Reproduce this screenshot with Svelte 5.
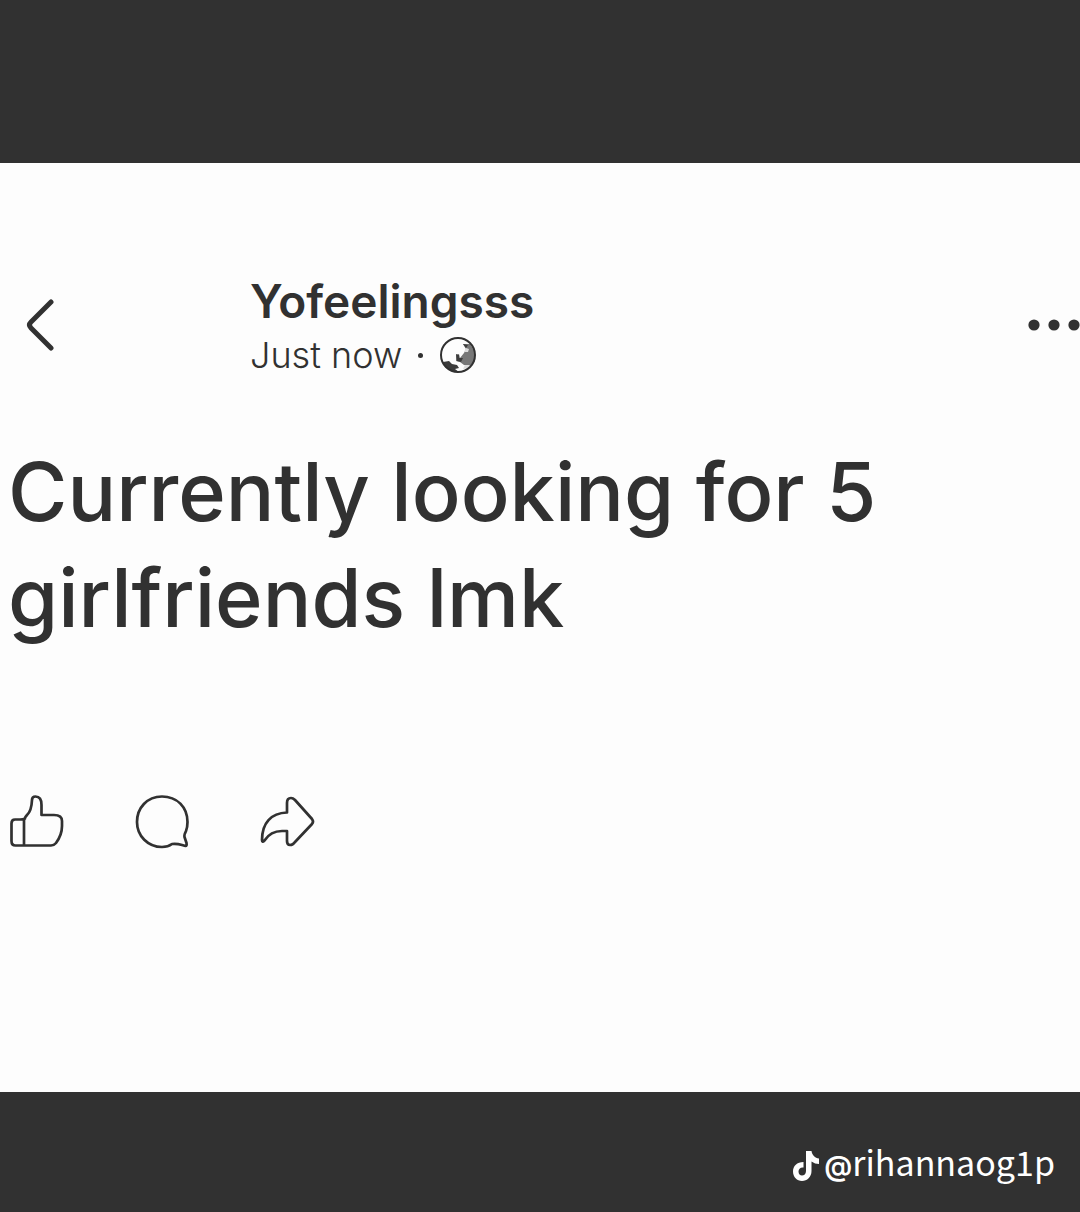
<script>
  export let author = "Yofeelingsss";
  export let time = "Just now";
  export let text = "Currently looking for 5 girlfriends lmk";
  export let handle = "rihannaog1p";
</script>

<div class="screen">
  <div class="top-bar"></div>

  <main class="post">
    <header class="post-header">
      <button class="icon-button back" aria-label="Back">
        <svg width="32" height="56" viewBox="0 0 32 56">
          <path d="M26 5 6 25Q3 28 6 31L26 51" stroke-width="5" />
        </svg>
      </button>

      <div class="meta">
        <h1 class="author">{author}</h1>
        <div class="details">
          <span>{time}</span>
          <span class="dot"></span>
          <svg class="globe" width="38" height="38" viewBox="0 0 38 38" role="img" aria-label="Public">
            <path class="land-light" d="M24 8 31 8 36 16 36 25 31 30 25 29 21 26 17 25 17 19 20 18 21 22 25 17 27 13Z" />
            <path class="land-dark" d="M4 26 10 25 13 28 18 29 20 32 16 33 20 36 12 35 6 31ZM17 18 20 19 20 22 24 22 22 26 18 25ZM24 8 29 9 27 12Z" />
            <path class="sea" d="M27 12 30 13 29 16 25 16ZM26 29 31 29 29 32 24 33Z" />
            <circle cx="19" cy="19" r="17" stroke-width="2" />
          </svg>
        </div>
      </div>

      <button class="icon-button more" aria-label="More options">
        <svg width="52" height="12" viewBox="0 0 52 12">
          <circle cx="6" cy="6" r="5.6" />
          <circle cx="26" cy="6" r="5.6" />
          <circle cx="46" cy="6" r="5.6" />
        </svg>
      </button>
    </header>

    <p class="post-text">{text}</p>

    <div class="actions">
      <button class="icon-button" aria-label="Like">
        <svg width="56" height="56" viewBox="0 0 56 56">
          <path d="M16 25V51.500M17 24.500Q15 25.500 12 25.500H7Q3.500 25.500 3.500 29.500V47Q3.500 51.500 7.500 51.500H43Q46 51.500 48 49Q54 41 54 32V27Q54 21 46 21H33.500V11Q33.500 2.500 27.500 2.500Q24 2.500 24 6Q23.500 17 19 21Q17 23 16 26" />
        </svg>
      </button>
      <button class="icon-button" aria-label="Comment">
        <svg width="56" height="56" viewBox="0 0 56 56">
          <path d="M53.500 28C53.500 13 43 2.500 28 2.500S3 14 3 28S14 53 28 53Q34 53 38 50Q43 49.500 48 51L51.500 52Q53 52 52.500 49L50.500 43Q50 41 52 37Q53.500 33 53.500 28Z" />
        </svg>
      </button>
      <button class="icon-button" aria-label="Share">
        <svg width="56" height="56" viewBox="0 0 56 56">
          <path d="M27 18.500V9Q27 4 31 4Q33 4 35 6L52 25Q54 27.500 52 30L35 48Q33 51 30 51Q27 51 27 47V37H22C14 37 8 41 4.500 46.500Q2 49 2 46C2 29 11 19 27 18.500Z" />
        </svg>
      </button>
    </div>
  </main>

  <footer class="bottom-bar">
    <a class="handle" href="#profile">
      <svg width="28" height="32" viewBox="0 0 28 32" aria-hidden="true">
        <path d="M14 1H19.500C20 5 23 8 27 8.500V14Q23 14 19.500 11.500V21C19.500 27 15 31 10 31S1 27 1 21.500S5 12 11.500 12V17.500C8.500 17 6.500 19 6.500 21.500S8 25.500 10 25.500S14 24 14 21Z" />
      </svg>
      <span><span class="at">@</span>{handle}</span>
    </a>
  </footer>
</div>

<style>
  :global(body) {
    margin: 0;
    background: #313131;
  }

  .screen {
    display: flex;
    flex-direction: column;
    min-height: 100vh;
    font-family: Inter, "Liberation Sans", sans-serif;
    color: #313131;
    overflow: hidden;
  }

  .top-bar {
    height: 163px;
  }

  .post {
    flex: 1;
    background: #fdfdfd;
    padding-top: 107px;
  }

  .post-header {
    display: flex;
    align-items: center;
    height: 110px;
    padding-left: 25px;
  }

  .icon-button {
    display: flex;
    padding: 0;
    border: none;
    background: none;
    color: inherit;
    cursor: pointer;
  }

  svg {
    display: block;
    flex: none;
    fill: none;
    stroke: currentColor;
    stroke-width: 2.7;
    stroke-linecap: round;
    stroke-linejoin: round;
  }

  .meta {
    flex: 1;
    margin-left: 193px;
  }

  .author {
    margin: 0;
    font-size: 46px;
    line-height: 60px;
    font-weight: 600;
  }

  .details {
    display: flex;
    align-items: center;
    font-size: 36px;
    line-height: 48px;
    font-weight: 300;
  }

  .dot {
    width: 5px;
    height: 5px;
    margin: 0 16px;
    border-radius: 50%;
    background: currentColor;
  }

  .globe .land-light {
    fill: #777;
    stroke: none;
  }

  .globe .land-dark {
    fill: #3c3c3c;
    stroke: none;
  }

  .globe .sea {
    fill: #ddd;
    stroke: none;
  }

  .more svg {
    fill: currentColor;
    stroke: none;
  }

  .post-text {
    margin: 59px 8px 0;
    font-size: 81px;
    line-height: 106px;
    font-weight: 500;
  }

  .actions {
    display: flex;
    gap: 70px;
    padding: 143px 0 0 8px;
  }

  .bottom-bar {
    display: flex;
    align-items: center;
    justify-content: flex-end;
    height: 120px;
    padding-right: 25px;
  }

  .handle {
    display: flex;
    align-items: center;
    gap: 4px;
    margin-top: 24px;
    color: #fff;
    font-family: "Noto Sans CJK SC", "Noto Sans", sans-serif;
    font-size: 34px;
    line-height: 44px;
    text-decoration: none;
  }

  .at {
    font-family: Inter, sans-serif;
    font-size: 28px;
    font-weight: 600;
  }

  .handle svg {
    margin-top: 4px;
    fill: currentColor;
    stroke: none;
  }
</style>
